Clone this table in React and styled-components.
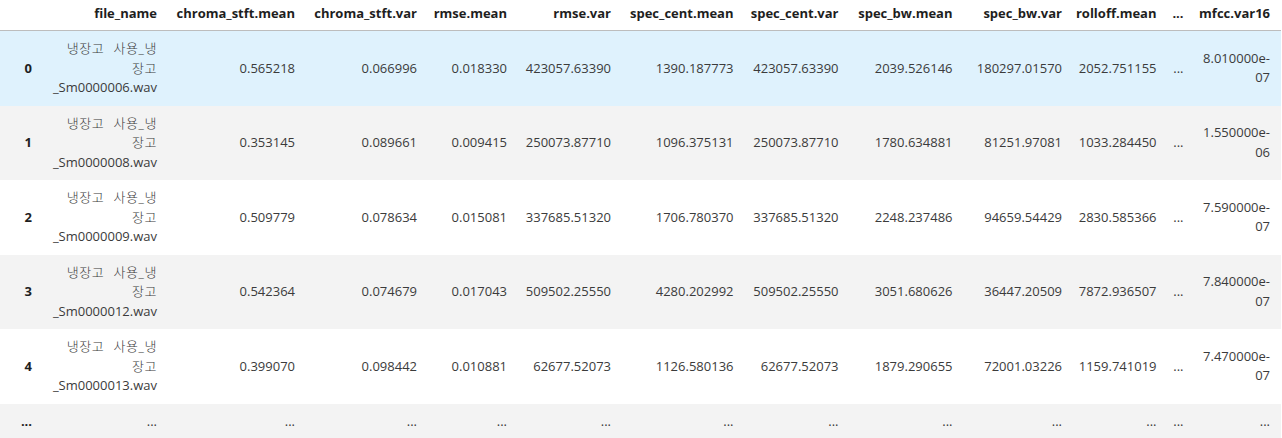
import React from "react";
import styled, { createGlobalStyle } from "styled-components";

const Global = createGlobalStyle`
  html, body { margin: 0; padding: 0; background: #ffffff; }
  body { font-family: "Open Sans", "Noto Sans CJK KR", sans-serif; font-size: 13px; }
`;

const Table = styled.table`
  border-collapse: collapse;
  border-spacing: 0;
  table-layout: fixed;
  width: 1281px;
  color: #3b3b3b;
  font-family: "Open Sans", "Noto Sans CJK KR", sans-serif;
  font-size: 13px;
  line-height: 19.5px;
`;

const HeadRow = styled.tr`
  border-bottom: 1px solid #bdbdbd;
`;

const HeadCell = styled.th`
  text-align: right;
  font-weight: 700;
  color: #1e1e1e;
  padding: 4px ${(p) => p.$padRight || 5}px 6.5px 5px;
  white-space: nowrap;
`;

const Row = styled.tr`
  background: ${(p) =>
    p.$tone === "hover" ? "#dff2fd" : p.$tone === "gray" ? "#f3f3f3" : "#ffffff"};
`;

const IndexCell = styled.th`
  text-align: right;
  font-weight: 700;
  color: #1e1e1e;
  vertical-align: middle;
  padding: 8px 5px;
`;

const Cell = styled.td`
  text-align: right;
  vertical-align: middle;
  padding: 8px ${(p) => p.$padRight || 5}px 8px 5px;
  white-space: nowrap;
`;

const KoreanLine = styled.span`
  font-weight: 300;
  letter-spacing: 0.6px;
  word-spacing: 5px;
`;

const widths = [37, 125, 138, 122, 90, 104, 122.5, 105, 114, 109.5, 94.5, 27, 92.5];

const headers = [
  "file_name",
  "chroma_stft.mean",
  "chroma_stft.var",
  "rmse.mean",
  "rmse.var",
  "spec_cent.mean",
  "spec_cent.var",
  "spec_bw.mean",
  "spec_bw.var",
  "rolloff.mean",
  "...",
  "mfcc.var16",
];

const rows = [
  ["_Sm0000006.wav", "0.565218", "0.066996", "0.018330", "423057.63390", "1390.187773", "423057.63390", "2039.526146", "180297.01570", "2052.751155", ["8.010000e-", "07"]],
  ["_Sm0000008.wav", "0.353145", "0.089661", "0.009415", "250073.87710", "1096.375131", "250073.87710", "1780.634881", "81251.97081", "1033.284450", ["1.550000e-", "06"]],
  ["_Sm0000009.wav", "0.509779", "0.078634", "0.015081", "337685.51320", "1706.780370", "337685.51320", "2248.237486", "94659.54429", "2830.585366", ["7.590000e-", "07"]],
  ["_Sm0000012.wav", "0.542364", "0.074679", "0.017043", "509502.25550", "4280.202992", "509502.25550", "3051.680626", "36447.20509", "7872.936507", ["7.840000e-", "07"]],
  ["_Sm0000013.wav", "0.399070", "0.098442", "0.010881", "62677.52073", "1126.580136", "62677.52073", "1879.290655", "72001.03226", "1159.741019", ["7.470000e-", "07"]],
];

const tones = ["hover", "gray", "white", "gray", "white"];

export default function App() {
  return (
    <>
      <Global />
      <Table>
        <colgroup>
          {widths.map((w, i) => (
            <col key={i} style={{ width: w + "px" }} />
          ))}
        </colgroup>
        <thead>
          <HeadRow>
            <HeadCell />
            {headers.map((h, i) => (
              <HeadCell key={h + i} $padRight={i === headers.length - 1 ? 11 : 5}>
                {h}
              </HeadCell>
            ))}
          </HeadRow>
        </thead>
        <tbody>
          {rows.map((r, i) => (
            <Row key={i} $tone={tones[i]}>
              <IndexCell>{i}</IndexCell>
              <Cell>
                <KoreanLine>냉장고 사용_냉</KoreanLine>
                <br />
                <KoreanLine>장고</KoreanLine>
                <br />
                {r[0]}
              </Cell>
              {r.slice(1, 10).map((v, j) => (
                <Cell key={j}>{v}</Cell>
              ))}
              <Cell>...</Cell>
              <Cell $padRight={11}>
                {r[10][0]}
                <br />
                {r[10][1]}
              </Cell>
            </Row>
          ))}
          <Row $tone="gray">
            <IndexCell>...</IndexCell>
            {headers.map((h, i) => (
              <Cell key={i} $padRight={i === headers.length - 1 ? 11 : 5}>
                ...
              </Cell>
            ))}
          </Row>
        </tbody>
      </Table>
    </>
  );
}
